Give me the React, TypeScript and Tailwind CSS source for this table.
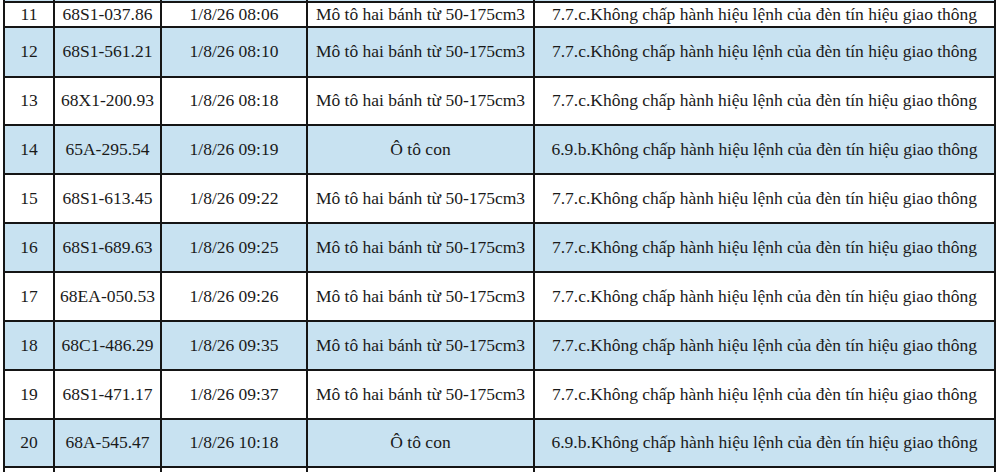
import React from 'react';

// Traffic violation list (rows 11–20), spreadsheet-style table

interface Violation {
  stt: number;
  plate: string;
  time: string;
  vehicle: string;
  offence: string;
  h: string;
}

const MOTO = 'Mô tô hai bánh từ 50-175cm3';
const CAR = 'Ô tô con';
const RED_MOTO = '7.7.c.Không chấp hành hiệu lệnh của đèn tín hiệu giao thông';
const RED_CAR = '6.9.b.Không chấp hành hiệu lệnh của đèn tín hiệu giao thông';

const rows: Violation[] = [
  { stt: 11, plate: '68S1-037.86', time: '1/8/26 08:06', vehicle: MOTO, offence: RED_MOTO, h: 'h-[25px]' },
  { stt: 12, plate: '68S1-561.21', time: '1/8/26 08:10', vehicle: MOTO, offence: RED_MOTO, h: 'h-[50px]' },
  { stt: 13, plate: '68X1-200.93', time: '1/8/26 08:18', vehicle: MOTO, offence: RED_MOTO, h: 'h-[48px]' },
  { stt: 14, plate: '65A-295.54', time: '1/8/26 09:19', vehicle: CAR, offence: RED_CAR, h: 'h-[49px]' },
  { stt: 15, plate: '68S1-613.45', time: '1/8/26 09:22', vehicle: MOTO, offence: RED_MOTO, h: 'h-[49px]' },
  { stt: 16, plate: '68S1-689.63', time: '1/8/26 09:25', vehicle: MOTO, offence: RED_MOTO, h: 'h-[49px]' },
  { stt: 17, plate: '68EA-050.53', time: '1/8/26 09:26', vehicle: MOTO, offence: RED_MOTO, h: 'h-[49px]' },
  { stt: 18, plate: '68C1-486.29', time: '1/8/26 09:35', vehicle: MOTO, offence: RED_MOTO, h: 'h-[49px]' },
  { stt: 19, plate: '68S1-471.17', time: '1/8/26 09:37', vehicle: MOTO, offence: RED_MOTO, h: 'h-[49px]' },
  { stt: 20, plate: '68A-545.47', time: '1/8/26 10:18', vehicle: CAR, offence: RED_CAR, h: 'h-[48px]' },
];

const cell = 'flex items-center justify-center border-r-2 border-[#151515] whitespace-nowrap';

const Row: React.FC<{ row?: Violation; blue: boolean; h: string }> = ({ row, blue, h }) => (
  <div className={`flex border-b-2 border-[#151515] ${h} ${blue ? 'bg-[#c8e2f1]' : 'bg-white'}`}>
    <div className={`${cell} w-[50px]`}>{row?.stt}</div>
    <div className={`${cell} w-[107px]`}>{row?.plate}</div>
    <div className={`${cell} w-[146px]`}>{row?.time}</div>
    <div className={`${cell} w-[227px]`}>{row?.vehicle}</div>
    <div className={`${cell} w-[461px]`}>{row?.offence}</div>
  </div>
);

export default function App() {
  return (
    <div className="w-[998px] h-[472px] overflow-hidden bg-white">
      <div
        className="ml-[3px] w-[993px] border-l-2 border-[#151515] text-[17.5px] leading-none text-[#1a1a1a]"
        style={{ fontFamily: '"Liberation Serif", "Times New Roman", serif' }}
      >
        {/* tail of row 10 above the crop */}
        <Row blue h="h-[3px]" />
        {rows.map((r) => (
          <Row key={r.stt} row={r} blue={r.stt % 2 === 0} h={r.h} />
        ))}
        <Row blue={false} h="h-[20px]" />
      </div>
    </div>
  );
}
